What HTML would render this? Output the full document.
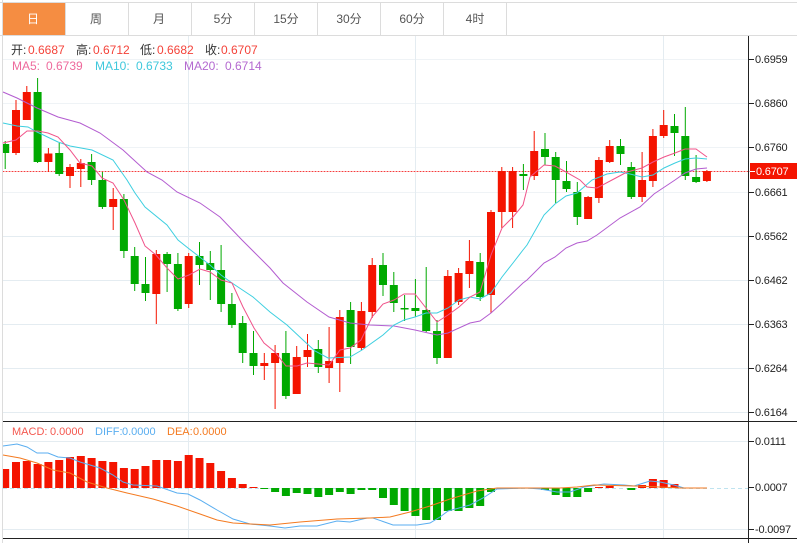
<!DOCTYPE html>
<html><head><meta charset="utf-8"><style>
html,body{margin:0;padding:0;background:#fff}
svg{display:block}
text{font-family:"Liberation Sans","Noto Sans CJK SC",sans-serif;font-size:12px}
.a{font-size:11px;fill:#222;letter-spacing:-.2px}
.t{fill:#555;text-anchor:middle}
.m{font-size:11px}
</style></head><body>
<svg width="797" height="543" viewBox="0 0 797 543" xmlns="http://www.w3.org/2000/svg">
<rect width="797" height="543" fill="#fff"/>
<!-- toolbar -->
<rect x="3" y="3" width="62" height="32" fill="#f58d42"/>
<path d="M0 2.5H797M0 35.5H797M2.5 0V543M65.5 3V35M128.5 3V35M191.5 3V35M254.5 3V35M317.5 3V35M380.5 3V35M443.5 3V35M506.5 3V35" stroke="#dcdcdc" fill="none"/>
<text x="33" y="23" text-anchor="middle" fill="#fff">日</text>
<text x="96" y="23" class="t">周</text>
<text x="159" y="23" class="t">月</text>
<text x="223" y="23" class="t">5分</text>
<text x="286" y="23" class="t">15分</text>
<text x="349" y="23" class="t">30分</text>
<text x="412" y="23" class="t">60分</text>
<text x="475" y="23" class="t">4时</text>
<!-- grid -->
<path d="M3 59.5H748M3 103.5H748M3 147.5H748M3 192.5H748" stroke="#eff3f6" fill="none"/>
<path d="M3 236.5H748M3 280.5H748M3 324.5H748M3 368.5H748M3 412.5H748M3 441.5H748M3 529.5H748M188.5 36V538M415.5 36V538M663.5 36V538" stroke="#e4ecf1" fill="none"/>
<!-- price line -->
<path d="M3 171.5H750" stroke="#fbb0b0" shape-rendering="crispEdges" fill="none"/>
<path d="M3 171.5H750" stroke="#f63c3c" stroke-dasharray="1 2" shape-rendering="crispEdges" fill="none"/>
<!-- wicks red -->
<path stroke="#f41400" fill="none" d="M16 100V155M26.8 86V120M48.4 148V172M70 164V188M80.8 159V187M113.2 188V230M156.3 250V324M188.7 253V308M264.3 353V380M275.1 345V409M296.7 346V394M307.5 334V367M329.1 327V383M339.8 310V392M361.4 302V350M372.2 258V318M447.8 270V358M458.6 268V305M469.4 240V288M491 210V313M501.8 167V228M512.6 167V228M534.2 131V180M588.1 196V219M598.9 157V203M609.7 140V163M642.1 152V202M652.9 129V187M663.7 110V138M706.9 170V182"/>
<!-- wicks green -->
<path stroke="#00a900" fill="none" d="M5.2 141V169M37.6 78V163M59.2 143V176M91.6 154V185M102.4 172V209M123.9 194V258M134.7 247V291M145.5 257V301M167.1 252V292M177.9 253V311M199.5 242V285M210.3 251V300M221.1 245V312M231.9 293V328M242.7 316V363M253.5 331V375M285.9 331V399M318.3 340V373M350.6 302V364M383 253V296M393.8 272V312M404.6 295V321M415.4 279V317M426.2 267V332M437 320V364M480.2 253V301M523.4 164V190M545 133V165M555.7 152V203M566.5 161V192M577.3 182V225M620.5 139V165M631.3 162V199M674.5 114V156M685.3 107V180M696.1 155V183"/>
<!-- bodies red -->
<path fill="#f41400" d="M12 110h8V153h-8zM22.8 92h8V120h-8zM44.4 153.5h8V162h-8zM66 167h8V176h-8zM76.8 163h8V169h-8zM109.2 199h8V207h-8zM152.3 254h8V294h-8zM184.7 256h8V304h-8zM260.3 363h8V366h-8zM271.1 353h8V363h-8zM292.7 357h8V394h-8zM303.5 350h8V357h-8zM325.1 361h8V368h-8zM335.8 317h8V363h-8zM357.4 311h8V348h-8zM368.2 265h8V312h-8zM443.8 276h8V358h-8zM454.6 273h8V302h-8zM465.4 261h8V274h-8zM487 212h8V295h-8zM497.8 171h8V212h-8zM508.6 171h8V212h-8zM530.2 151h8V176h-8zM584.1 197h8V219h-8zM594.9 160h8V198h-8zM605.7 146h8V162h-8zM638.1 180h8V197h-8zM648.9 136h8V181h-8zM659.7 125h8V136h-8zM702.9 171h8V181h-8z"/>
<!-- bodies green -->
<path fill="#00a900" d="M3 144h6.2V153H3zM33.6 92h8V162h-8zM55.2 153h8V174h-8zM87.6 162h8V180h-8zM98.4 180h8V207h-8zM119.9 199h8V251h-8zM130.7 256h8V284h-8zM141.5 284h8V293h-8zM163.1 254h8V264h-8zM173.9 264h8V309h-8zM195.5 256h8V265h-8zM206.3 263h8V270h-8zM217.1 270h8V304h-8zM227.9 304h8V325h-8zM238.7 323h8V353h-8zM249.5 353h8V366h-8zM281.9 353h8V396h-8zM314.3 349h8V367h-8zM346.6 310h8V347h-8zM379 265h8V285h-8zM389.8 285h8V303h-8zM400.6 308h8V309.5h-8zM411.4 308h8V311h-8zM422.2 310h8V331h-8zM433 331h8V358h-8zM476.2 262h8V297h-8zM519.4 174h8V176h-8zM541 149h8V157h-8zM551.7 157h8V180h-8zM562.5 181h8V189h-8zM573.3 192h8V217h-8zM616.5 146h8V154h-8zM627.3 167h8V197h-8zM670.5 126h8V133h-8zM681.3 136h8V176h-8zM692.1 177h8V182h-8z"/>
<!-- MA lines -->
<polyline fill="none" stroke="#b35cd0" points="3,92 17,98 37,108 58,117 80,123 100,133 123,150 147,172 162,180 177,192 200,203 220,217 242,240 270,268 283,283 307,302 329,317 350,323 370,325 394,326 415,330 437,335 448,333 470,323 480,321 491,313 502,303 523,283 527,280 544,263 555,257 566,248 577,243 587,241 597,235 620,218 640,207 654,194 675,180 685,173 696,169 707,168"/>
<polyline fill="none" stroke="#3dcfe0" points="3,123 17,126 28,127 37,132 58,142 70,146 92,150 113,160 127,180 135,193 145,207 167,225 178,240 188,248 210,265 221,275 232,283 253,297 270,312 287,325 303,340 315,351 328,358 350,357 362,350 383,335 394,325 404,320 415,317 426,313 437,313 448,308 459,300 470,297 480,299 491,293 502,277 513,263 523,250 527,245 544,215 555,204 566,196 577,193 592,180 607,174 620,172 630,174 642,177 653,175 664,168 675,163 685,159 696,158 707,159"/>
<polyline fill="none" stroke="#f0538a" points="3,143 16,140 27,131 38,131 48,133 58,137 70,150 80,163 92,166 102,178 113,183 124,200 135,223 145,246 156,255 167,268 178,279 189,275 200,269 210,272 221,280 232,283 243,307 254,328 264,343 275,352 286,366 297,366 307,363 318,364 329,365 340,350 350,348 361,340 372,317 383,304 394,300 404,294 415,294 426,308 437,322 448,315 459,307 470,297 480,292 491,255 502,228 513,217 523,205 530,177 544,165 555,166 566,172 580,180 587,187 597,188 612,180 627,172 642,168 653,162 664,157 675,153 685,149 696,149 707,157"/>
<!-- MACD zero dashes -->
<path d="M3 488.5H748" stroke="#bfe3ef" stroke-dasharray="4 3" fill="none"/>
<!-- MACD bars -->
<path fill="#f41400" d="M3 469h6.2V488H3zM12 462h8V488h-8zM22.8 461h8V488h-8zM33.6 464h8V488h-8zM44.4 462h8V488h-8zM55.2 460h8V488h-8zM66 457h8V488h-8zM76.8 456h8V488h-8zM87.6 458h8V488h-8zM98.4 461h8V488h-8zM109.2 462h8V488h-8zM119.9 468h8V488h-8zM130.7 469h8V488h-8zM141.5 466h8V488h-8zM152.3 460h8V488h-8zM163.1 460h8V488h-8zM173.9 461h8V488h-8zM184.7 455h8V488h-8zM195.5 458h8V488h-8zM206.3 463h8V488h-8zM217.1 471h8V488h-8zM227.9 478h8V488h-8zM238.7 484h8V488h-8zM249.5 487h8V488h-8zM595 487h8V488h-8zM605.7 486h8V488h-8zM638.1 485h8V488h-8zM648.9 479h8V488h-8zM659.7 480h8V488h-8zM670.5 484h8V488h-8z"/>
<path fill="#00a900" d="M260.3 488h8V489h-8zM271.1 488h8V492h-8zM281.9 488h8V496h-8zM292.7 488h8V493h-8zM303.5 488h8V494h-8zM314.3 488h8V497h-8zM325.1 488h8V495h-8zM335.8 488h8V492h-8zM346.6 488h8V494h-8zM357.4 488h8V490h-8zM368.2 488h8V490h-8zM379 488h8V498h-8zM389.8 488h8V505h-8zM400.6 488h8V511h-8zM411.4 488h8V516h-8zM422.2 488h8V520h-8zM433 488h8V520h-8zM443.8 488h8V511h-8zM454.6 488h8V511h-8zM465.4 488h8V508h-8zM476.2 488h8V506h-8zM487 488h8V492h-8zM541 488h8V490h-8zM551.7 488h8V495h-8zM562.5 488h8V497h-8zM573.3 488h8V497h-8zM584.1 488h8V492h-8zM627.3 488h8V490h-8z"/>
<polyline fill="none" stroke="#5aaef0" points="3,446 17,444 27,447 37,453 48,453 58,457 70,458 80,462 100,468 113,475 123,482 133,485 157,486 177,493 188,494 200,500 217,510 233,519 250,524 270,526 285,528 300,526 317,526 337,521 350,522 367,518 373,518 393,525 417,525 430,523 440,517 448,511 470,505 483,498 497,489 527,488 540,489 557,492 570,492 584,487 604,484 624,485 634,486 650,481 660,482 674,485 684,488 707,488"/>
<polyline fill="none" stroke="#f47a20" points="3,455 20,458 37,463 53,470 70,473 87,482 107,488 127,493 153,499 177,506 200,514 217,520 233,523 270,525 300,522 337,519 370,518 390,517 410,512 430,506 450,499 477,491 497,488 560,488 577,487 594,485 634,486 660,487 680,488 707,488"/>
<!-- axes -->
<path d="M3 421.5H797M3 538.5H797M748.5 36V543M749 59.5H754M749 103.5H754M749 147.5H754M749 192.5H754M749 236.5H754M749 280.5H754M749 324.5H754M749 368.5H754M749 412.5H754M749 441.5H754M749 487.5H754M749 529.5H754" stroke="#222" fill="none"/>
<text class="a" x="755" y="63">0.6959</text>
<text class="a" x="755" y="107">0.6860</text>
<text class="a" x="755" y="151">0.6760</text>
<text class="a" x="755" y="196">0.6661</text>
<text class="a" x="755" y="240">0.6562</text>
<text class="a" x="755" y="284">0.6462</text>
<text class="a" x="755" y="328">0.6363</text>
<text class="a" x="755" y="372">0.6264</text>
<text class="a" x="755" y="416">0.6164</text>
<text class="a" x="755" y="445">0.0111</text>
<text class="a" x="755" y="491">0.0007</text>
<text class="a" x="755" y="533">-0.0097</text>
<rect x="750" y="163" width="47" height="16" fill="#f41400"/>
<path d="M750 171.5H755" stroke="#fff"/>
<text x="756" y="175" class="a" style="fill:#fff">0.6707</text>
<!-- header -->
<g fill="#333">
<text x="11" y="54">开:</text><text x="76" y="54">高:</text><text x="140" y="54">低:</text><text x="205" y="54">收:</text>
</g>
<g fill="#f4433a">
<text x="28" y="54">0.6687</text><text x="93" y="54">0.6712</text><text x="157" y="54">0.6682</text><text x="221" y="54">0.6707</text>
</g>
<g fill="#ee6a9c"><text x="12" y="70">MA5:</text><text x="46" y="70">0.6739</text></g>
<g fill="#3fc8dc"><text x="95" y="70">MA10:</text><text x="136" y="70">0.6733</text></g>
<g fill="#b469d0"><text x="184" y="70">MA20:</text><text x="225" y="70">0.6714</text></g>
<g fill="#f4584f"><text class="m" x="12" y="435">MACD:</text><text class="m" x="50" y="435">0.0000</text></g>
<g fill="#5aaef0"><text class="m" x="95" y="435">DIFF:</text><text class="m" x="122" y="435">0.0000</text></g>
<g fill="#f47a20"><text class="m" x="167" y="435">DEA:</text><text class="m" x="193" y="435">0.0000</text></g>
</svg>
</body></html>
